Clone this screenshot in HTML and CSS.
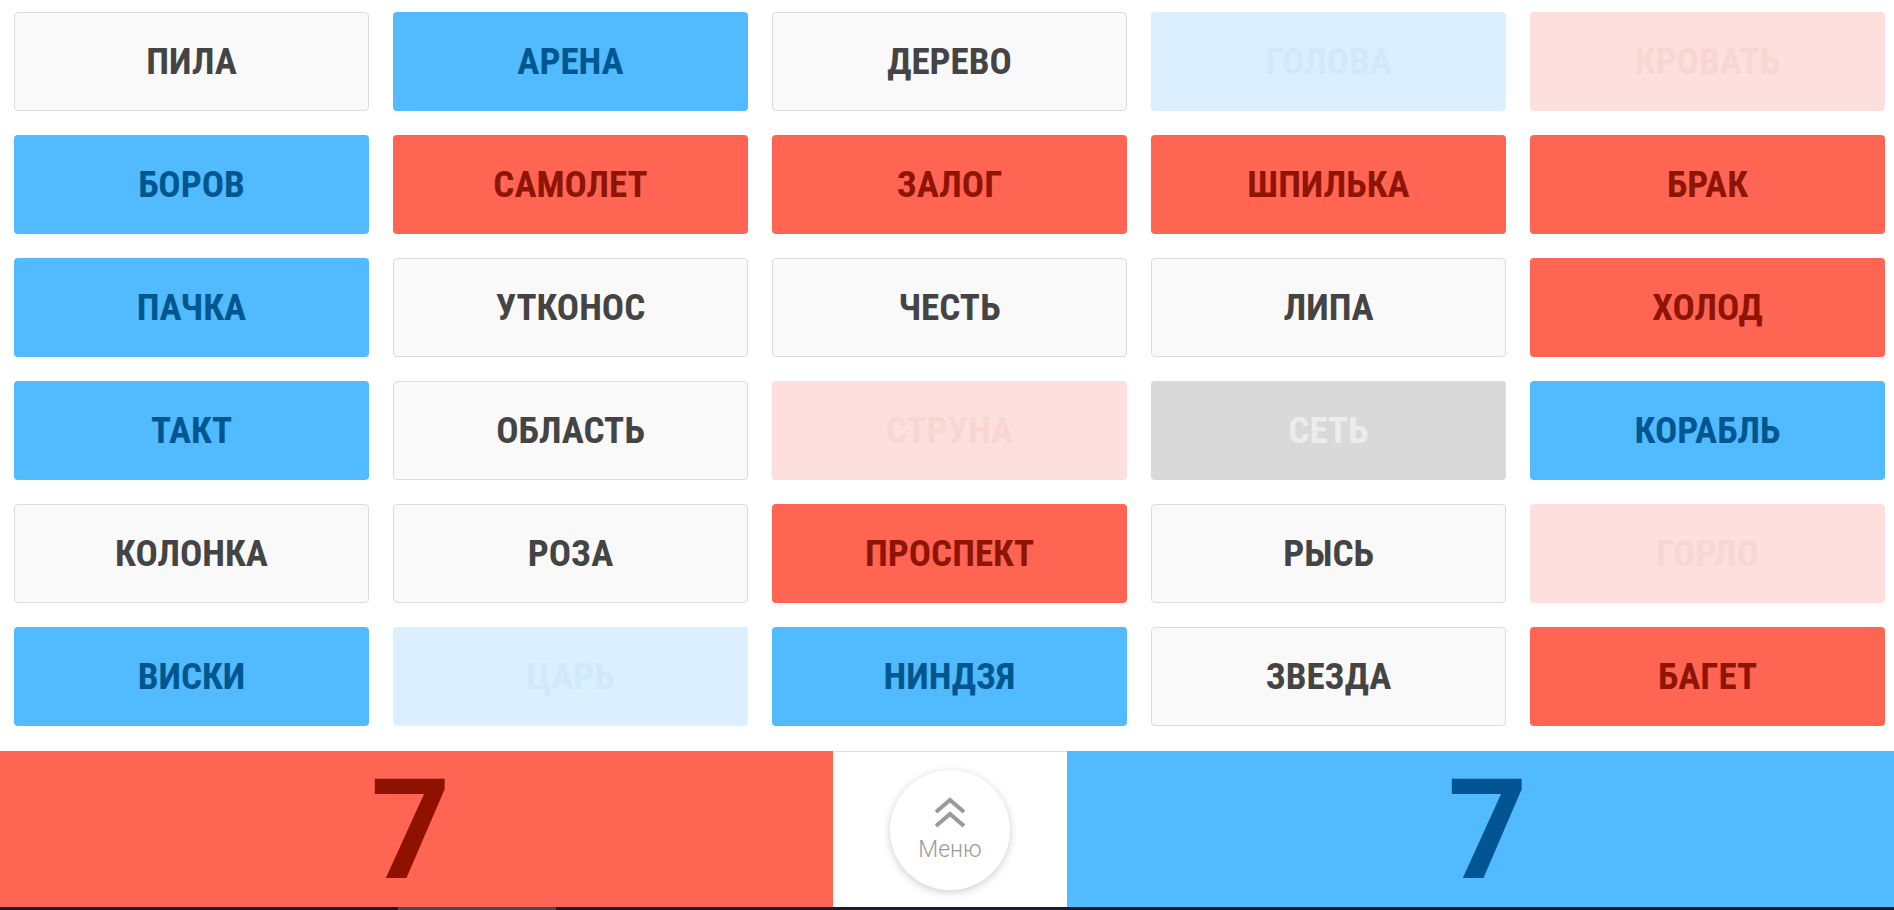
FILE: index.html
```html
<!DOCTYPE html>
<html lang="ru">
<head>
<meta charset="utf-8">
<title>Кодовые имена</title>
<link rel="stylesheet" href="styles.css">
</head>
<body>
<div class="page">
  <main class="board">
    <div class="card neutral"><span>ПИЛА</span></div>
    <div class="card blue"><span>АРЕНА</span></div>
    <div class="card neutral"><span>ДЕРЕВО</span></div>
    <div class="card blue faded"><span>ГОЛОВА</span></div>
    <div class="card red faded"><span>КРОВАТЬ</span></div>

    <div class="card blue"><span>БОРОВ</span></div>
    <div class="card red"><span>САМОЛЕТ</span></div>
    <div class="card red"><span>ЗАЛОГ</span></div>
    <div class="card red"><span>ШПИЛЬКА</span></div>
    <div class="card red"><span>БРАК</span></div>

    <div class="card blue"><span>ПАЧКА</span></div>
    <div class="card neutral"><span>УТКОНОС</span></div>
    <div class="card neutral"><span>ЧЕСТЬ</span></div>
    <div class="card neutral"><span>ЛИПА</span></div>
    <div class="card red"><span>ХОЛОД</span></div>

    <div class="card blue"><span>ТАКТ</span></div>
    <div class="card neutral"><span>ОБЛАСТЬ</span></div>
    <div class="card red faded"><span>СТРУНА</span></div>
    <div class="card assassin"><span>СЕТЬ</span></div>
    <div class="card blue"><span>КОРАБЛЬ</span></div>

    <div class="card neutral"><span>КОЛОНКА</span></div>
    <div class="card neutral"><span>РОЗА</span></div>
    <div class="card red"><span>ПРОСПЕКТ</span></div>
    <div class="card neutral"><span>РЫСЬ</span></div>
    <div class="card red faded"><span>ГОРЛО</span></div>

    <div class="card blue"><span>ВИСКИ</span></div>
    <div class="card blue faded"><span>ЦАРЬ</span></div>
    <div class="card blue"><span>НИНДЗЯ</span></div>
    <div class="card neutral"><span>ЗВЕЗДА</span></div>
    <div class="card red"><span>БАГЕТ</span></div>
  </main>

  <footer class="scorebar">
    <div class="score score-red">7</div>
    <div class="menu-cell">
      <button class="menu-btn" type="button">
        <svg class="menu-icon" viewBox="0 0 34 31" width="34" height="31" aria-hidden="true">
          <path d="M3 15 L17 3 L31 15" />
          <path d="M3 29 L17 17 L31 29" />
        </svg>
        <span class="menu-label">Меню</span>
      </button>
    </div>
    <div class="score score-blue">7</div>
  </footer>
  <div class="taskbar"><div class="taskbar-seg"></div></div>
</div>
</body>
</html>
```

FILE: styles.css
```css
* { box-sizing: border-box; }

html, body {
  margin: 0;
  padding: 0;
  background: #ffffff;
  font-family: Roboto, "Noto Sans", "Liberation Sans", sans-serif;
}

.page {
  width: 1894px;
  height: 910px;
  display: flex;
  flex-direction: column;
  overflow: hidden;
}

.board {
  display: grid;
  grid-template-columns: repeat(5, 1fr);
  grid-auto-rows: 99px;
  column-gap: 24px;
  row-gap: 24px;
  padding: 12px 9px 0 14px;
}

.card {
  display: flex;
  align-items: center;
  justify-content: center;
  border-radius: 4px;
  border: 1px solid transparent;
  font-family: "Roboto Condensed", Roboto, sans-serif;
  font-stretch: 75%;
  font-weight: 700;
  font-size: 37px;
  letter-spacing: 0;
}

.card span {
  display: inline-block;
  line-height: 1;
}

.neutral {
  background: #f9f9f9;
  border-color: #dcdcdc;
  color: #444444;
}

.blue {
  background: #52baff;
  color: #00578f;
}

.red {
  background: #ff6552;
  color: #8e1405;
}

.blue.faded {
  background: #dbeffe;
  color: #d0e9fc;
}

.red.faded {
  background: #fddfdd;
  color: #f9d6d2;
}

.assassin {
  background: #d9d9d9;
  color: #ececec;
}

.scorebar {
  margin-top: 25px;
  height: 156px;
  display: grid;
  grid-template-columns: 833px 234px 1fr;
}

.score {
  display: flex;
  align-items: center;
  justify-content: center;
  font-family: Roboto, sans-serif;
  font-weight: 700;
  font-size: 139px;
  line-height: 1;
  padding-top: 2px;
}

.score-red {
  background: #ff6552;
  color: #8f1200;
  padding-right: 12px;
}

.score-blue {
  background: #52baff;
  color: #005592;
  padding-left: 14px;
}

.menu-cell {
  background: #ffffff;
  border-top: 1px solid #dedede;
  display: flex;
  align-items: center;
  justify-content: center;
}

.menu-btn {
  width: 120px;
  height: 120px;
  border-radius: 50%;
  border: none;
  background: #ffffff;
  box-shadow: 0 2px 9px rgba(0, 0, 0, 0.2);
  display: flex;
  flex-direction: column;
  align-items: center;
  justify-content: center;
  gap: 10px;
  padding: 0 0 2px 0;
  cursor: pointer;
  font-family: Roboto, sans-serif;
}

.menu-icon {
  fill: none;
  stroke: #9a9a9a;
  stroke-width: 4;
  stroke-linecap: butt;
  stroke-linejoin: miter;
}

.menu-label {
  font-size: 23px;
  font-weight: 300;
  color: #9a9a9a;
  line-height: 1;
}

.taskbar {
  height: 3px;
  background: #1c1b29;
}

.taskbar-seg {
  margin-left: 398px;
  width: 158px;
  height: 3px;
  background: #4a4a55;
}
```
